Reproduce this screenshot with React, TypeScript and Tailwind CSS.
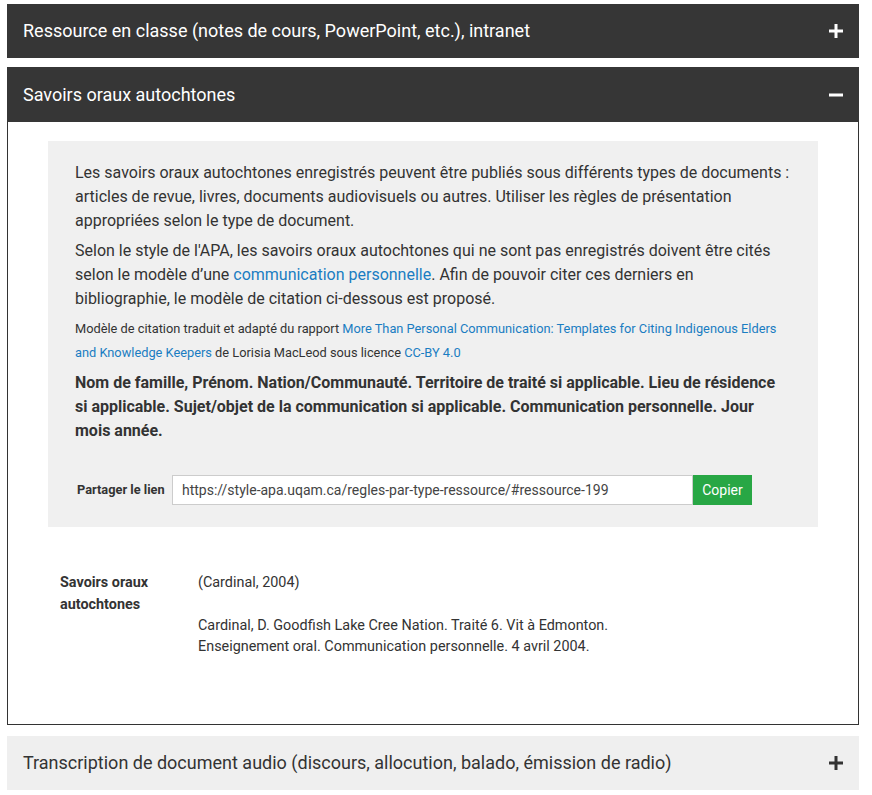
type Section = {
  title: string;
  open?: boolean;
  dark?: boolean;
};

function PlusIcon({ color }: { color: string }) {
  return (
    <svg width="14" height="14" viewBox="0 0 14 14" aria-hidden>
      <rect x="5.5" y="0" width="3" height="14" fill={color} />
      <rect x="0" y="5.5" width="14" height="3" fill={color} />
    </svg>
  );
}

function MinusIcon({ color }: { color: string }) {
  return (
    <svg width="14" height="14" viewBox="0 0 14 14" aria-hidden>
      <rect x="0" y="5.5" width="14" height="3" fill={color} />
    </svg>
  );
}

function AccordionHeader({ title, open, dark }: Section) {
  const base = "flex items-center justify-between pl-4 pr-[16px]";
  const tone = dark ? "bg-[#363636] text-white" : "bg-[#efefef] text-[#333]";
  return (
    <div className={`${base} ${tone} ${open ? "h-[55px]" : "h-[54px]"}`}>
      <span className="text-[18px] leading-none">{title}</span>
      {open ? <MinusIcon color="#fff" /> : <PlusIcon color={dark ? "#fff" : "#333"} />}
    </div>
  );
}

const link = "text-[#1a7dc2]";

export default function App() {
  return (
    <div
      className="min-h-[795px] bg-white px-[7px] pt-[4px] text-[#333]"
      style={{ fontFamily: "Roboto, 'Noto Sans', sans-serif" }}
    >
      <div className="w-[852px]">
        <AccordionHeader title="Ressource en classe (notes de cours, PowerPoint, etc.), intranet" dark />

        <div className="mt-[9px]">
          <AccordionHeader title="Savoirs oraux autochtones" dark open />
          <div className="h-[603px] border border-t-0 border-[#333] px-10 pt-[19px]">
            <div className="bg-[#f0f0f0] pb-[22px] pl-[27px] pr-[27px] pt-[20px]">
              <p className="mb-1.5 text-[16px] leading-6">
                Les savoirs oraux autochtones enregistrés peuvent être publiés sous différents types de documents :
                articles de revue, livres, documents audiovisuels ou autres. Utiliser les règles de présentation
                appropriées selon le type de document.
              </p>
              <p className="mb-1.5 text-[16px] leading-6">
                Selon le style de l'APA, les savoirs oraux autochtones qui ne sont pas enregistrés doivent être cités
                selon le modèle d’une <a className={link}>communication personnelle</a>. Afin de pouvoir citer ces
                derniers en bibliographie, le modèle de citation ci-dessous est proposé.
              </p>
              <p className="mb-1.5 text-[12.8px] leading-6">
                Modèle de citation traduit et adapté du rapport{" "}
                <a className={link}>
                  More Than Personal Communication: Templates for Citing Indigenous Elders and Knowledge Keepers
                </a>{" "}
                de Lorisia MacLeod sous licence <a className={link}>CC-BY 4.0</a>
              </p>
              <p className="text-[16px] font-bold leading-6">
                Nom de famille, Prénom. Nation/Communauté. Territoire de traité si applicable. Lieu de résidence si
                applicable. Sujet/objet de la communication si applicable. Communication personnelle. Jour mois année.
              </p>

              <div className="mt-[32px] flex items-center">
                <span className="w-[97px] pl-[2px] text-[12.8px] font-bold">Partager le lien</span>
                <input
                  readOnly
                  value="https://style-apa.uqam.ca/regles-par-type-ressource/#ressource-199"
                  className="h-[30px] w-[521px] border border-[#ccc] bg-white px-[9px] text-[14px] text-[#444] outline-none"
                />
                <button className="h-[30px] w-[59px] bg-[#28a745] text-[14px] text-white">Copier</button>
              </div>
            </div>

            <div className="ml-3 mt-[45px] flex text-[14.4px]">
              <div className="w-[138px] font-bold leading-[22px]">
                Savoirs oraux
                <br />
                autochtones
              </div>
              <div>
                <p className="leading-[22px]">(Cardinal, 2004)</p>
                <p className="mt-[21px] leading-[21px]">
                  Cardinal, D. Goodfish Lake Cree Nation. Traité 6. Vit à Edmonton.
                  <br />
                  Enseignement oral. Communication personnelle. 4 avril 2004.
                </p>
              </div>
            </div>
          </div>
        </div>

        <div className="mt-[11px]">
          <AccordionHeader title="Transcription de document audio (discours, allocution, balado, émission de radio)" />
        </div>
      </div>
    </div>
  );
}
